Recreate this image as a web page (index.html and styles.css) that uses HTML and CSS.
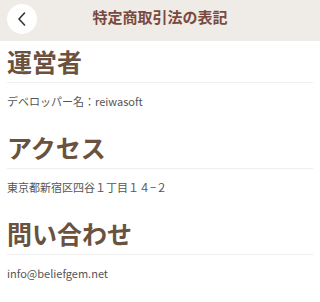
FILE: index.html
```html
<!DOCTYPE html>
<html lang="ja">
<head>
<meta charset="utf-8">
<link rel="stylesheet" href="styles.css">
</head>
<body>
<header class="topbar">
  <div class="back">
    <svg width="10" height="14" viewBox="0 0 10 14"><path d="M7.5 1 L2 7 L7.5 13" fill="none" stroke="#333" stroke-width="1.6" stroke-linecap="round" stroke-linejoin="round"/></svg>
  </div>
  <h1 class="title">特定商取引法の表記</h1>
  <div></div>
</header>
<main class="content">
  <section class="sec">
    <h2 class="sec-title">運営者</h2>
    <p class="sec-text">デベロッパー名：reiwasoft</p>
  </section>
  <section class="sec">
    <h2 class="sec-title">アクセス</h2>
    <p class="sec-text">東京都新宿区四谷１丁目１４−２</p>
  </section>
  <section class="sec">
    <h2 class="sec-title">問い合わせ</h2>
    <p class="sec-text">info@beliefgem.net</p>
  </section>
</main>
</body>
</html>
```

FILE: styles.css
```css
html, body {
  margin: 0;
  padding: 0;
  background: #ffffff;
  font-family: "Noto Sans CJK JP", "Noto Sans", sans-serif;
}
.topbar {
  height: 41px;
  background: #efebe7;
  display: grid;
  grid-template-columns: 1fr auto 1fr;
  align-items: start;
}
.back {
  margin: 4px 0 0 7px;
  width: 30px;
  height: 30px;
  border-radius: 50%;
  background: #ffffff;
  display: flex;
  align-items: center;
  justify-content: center;
}
.back svg {
  margin-left: -1px;
}
.title {
  margin: 7px 0 0 0;
  font-size: 15px;
  line-height: 20px;
  font-weight: 700;
  color: #7a4a3e;
}
.content {
  padding: 3px 7px 0 7px;
  display: flex;
  flex-direction: column;
}
.sec {
  display: flex;
  flex-direction: column;
  padding-bottom: 19px;
}
.sec-title {
  margin: 0;
  padding-bottom: 4px;
  font-size: 25px;
  line-height: 34px;
  font-weight: 700;
  color: #6a523f;
  border-bottom: 1px solid #eeeeee;
}
.sec-text {
  margin: 8px 0 0 0;
  font-size: 11px;
  line-height: 20px;
  color: #555555;
}
```
